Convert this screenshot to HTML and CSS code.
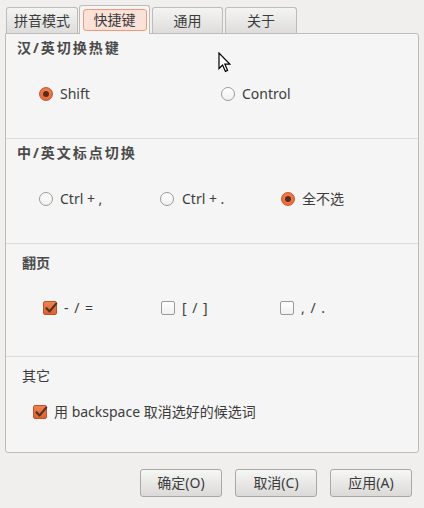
FILE: index.html
```html
<!DOCTYPE html>
<html lang="zh-CN">
<head>
<meta charset="utf-8">
<title>快捷键</title>
<link rel="stylesheet" href="styles.css">
</head>
<body>
<div class="window">
  <div class="tabs">
    <div class="tab t1">拼音模式</div>
    <div class="tab active"><span class="focus">快捷键</span></div>
    <div class="tab t3">通用</div>
    <div class="tab t4">关于</div>
  </div>
  <div class="panel">
    <div class="sec s1">
      <div class="head bold wide">汉/英切换热键</div>
      <div class="row r1">
        <label class="opt w182"><span class="radio on"></span><span class="lbl">Shift</span></label>
        <label class="opt"><span class="radio"></span><span class="lbl">Control</span></label>
      </div>
    </div>
    <div class="sec s2">
      <div class="head bold wide">中/英文标点切换</div>
      <div class="row r1">
        <label class="opt w121"><span class="radio"></span><span class="lbl">Ctrl + ,</span></label>
        <label class="opt w121"><span class="radio"></span><span class="lbl l2">Ctrl + .</span></label>
        <label class="opt"><span class="radio on"></span><span class="lbl">全不选</span></label>
      </div>
    </div>
    <div class="sec s3">
      <div class="head bold h2">翻页</div>
      <div class="row r3">
        <label class="opt w118"><span class="check on"><svg viewBox="0 0 14 14" class="tick"><path d="M2.5 7.2 L5.6 10.4 L12.2 2.6"/></svg></span><span class="lbl sym">- / =</span></label>
        <label class="opt w119"><span class="check"></span><span class="lbl sym">[ / ]</span></label>
        <label class="opt"><span class="check"></span><span class="lbl sym">, / .</span></label>
      </div>
    </div>
    <div class="sec s4">
      <div class="head h2">其它</div>
      <div class="row r4">
        <label class="opt"><span class="check on"><svg viewBox="0 0 14 14" class="tick"><path d="M2.5 7.2 L5.6 10.4 L12.2 2.6"/></svg></span><span class="lbl lb4">用 backspace 取消选好的候选词</span></label>
      </div>
    </div>
  </div>
  <div class="buttons">
    <button class="btn">确定(O)</button>
    <button class="btn">取消(C)</button>
    <button class="btn">应用(A)</button>
  </div>
  <svg class="cursor" viewBox="0 0 13 21" width="13" height="21"><path d="M1 1 L1 16.5 L4.6 13 L7.4 19.4 L9.6 18.4 L6.9 12.2 L11.8 12.2 Z"/></svg>
</div>
</body>
</html>
```
FILE: styles.css
```css
* { box-sizing: border-box; }
html, body { margin: 0; padding: 0; }
body {
  background: #f0efee;
  font-family: "Noto Sans", "Noto Sans CJK SC", sans-serif;
  font-size: 14px;
  color: #3c3c3c;
  width: 424px;
  height: 508px;
  overflow: hidden;
}
.window { position: relative; width: 424px; height: 508px; }

.tabs {
  display: flex;
  align-items: flex-end;
  gap: 1px;
  padding-left: 6px;
  height: 33px;
}
.tab {
  height: 26px;
  border: 1px solid #bdbcba;
  border-bottom: none;
  border-radius: 3px 3px 0 0;
  background: linear-gradient(#f4f4f3, #dedddb);
  display: flex;
  align-items: center;
  justify-content: center;
  line-height: 18px;
  padding-top: 1px;
}
.t1 { width: 72px; }
.t3 { width: 71px; margin-left: 1px; }
.t4 { width: 72px; margin-left: 1px; }
.tab.active {
  width: 71px;
  height: 29px;
  margin-bottom: -1px;
  background: #f5f5f5;
  position: relative;
  z-index: 2;
  padding-top: 0;
  align-items: flex-start;
}
.focus {
  margin-top: 3px;
  width: 64px;
  height: 22px;
  border: 1px solid #f19a78;
  border-radius: 3px;
  background: #fbe2d9;
  display: flex;
  align-items: center;
  justify-content: center;
}

.panel {
  margin-left: 5px;
  width: 414px;
  height: 420px;
  border: 1px solid #bdbcba;
  border-radius: 0 3px 3px 3px;
  background: #f5f5f5;
  display: flex;
  flex-direction: column;
}
.sec { border-bottom: 1px solid #dcdcdc; }
.sec.s4 { border-bottom: none; flex: 1; }
.s1 { height: 105px; padding-top: 4px; }
.s2 { height: 105px; padding-top: 4px; }
.s3 { height: 113px; padding-top: 9px; }
.s4 { padding-top: 9px; }

.head { line-height: 20px; height: 20px; padding-left: 11px; }
.head.h2 { padding-left: 16px; }
.bold { font-weight: bold; color: #4a4a4a; }
.wide { letter-spacing: 2px; }

.row { display: flex; align-items: center; height: 20px; margin-top: 26px; padding-left: 33px; }
.row.r3 { margin-top: 25px; padding-left: 37px; }
.row.r4 { margin-top: 16px; padding-left: 27px; }

.opt { display: flex; align-items: center; height: 20px; }
.w182 { width: 182px; }
.w121 { width: 121px; }
.w118 { width: 118px; }
.w119 { width: 119px; }
.lbl { margin-left: 7px; line-height: 20px; white-space: nowrap; }
.l2 { margin-left: 8px; }
.lb4 { margin-left: 7px; }
.sym { letter-spacing: 1px; }

.radio {
  width: 14px; height: 14px;
  border-radius: 50%;
  border: 1px solid #9a9a9a;
  background: linear-gradient(#ffffff, #f0f0f0);
  display: inline-flex;
  align-items: center;
  justify-content: center;
  flex: none;
}
.radio.on {
  border-color: #c4582f;
  background: radial-gradient(circle at 50% 40%, #f48a5c, #e25f2c);
}
.radio.on::after {
  content: "";
  width: 6px; height: 6px;
  border-radius: 50%;
  background: #5b2a18;
}

.check {
  width: 14px; height: 14px;
  border-radius: 2px;
  border: 1px solid #9a9a9a;
  background: linear-gradient(#ffffff, #f0f0f0);
  flex: none;
  position: relative;
  display: inline-block;
}
.check.on {
  border-color: #b95330;
  background: linear-gradient(#f0824f, #e0602d);
}
.tick {
  position: absolute;
  left: 0; top: -1px;
  width: 14px; height: 14px;
  overflow: visible;
}
.tick path { fill: none; stroke: #4e3328; stroke-width: 2.2; stroke-linecap: round; stroke-linejoin: round; }

.buttons {
  display: flex;
  justify-content: flex-end;
  gap: 13px;
  padding-right: 12px;
  margin-top: 16px;
}
.btn {
  width: 82px;
  height: 28px;
  border: 1px solid #a9a8a6;
  border-radius: 3px;
  background: linear-gradient(#f6f6f5, #dbdad8);
  font-family: "Noto Sans", "Noto Sans CJK SC", sans-serif;
  font-size: 14px;
  color: #3c3c3c;
  padding: 0;
  line-height: 26px;
}

.cursor { position: absolute; left: 218px; top: 52px; }
.cursor path { fill: #ffffff; stroke: #000000; stroke-width: 1.2; stroke-linejoin: miter; }
```
